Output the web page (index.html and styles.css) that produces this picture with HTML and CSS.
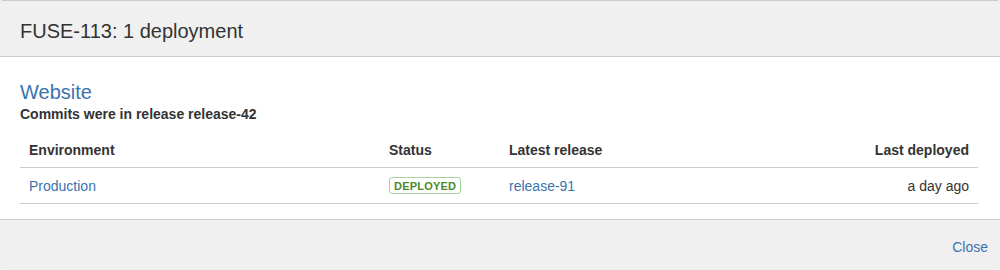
FILE: index.html
```html
<!DOCTYPE html>
<html lang="en">
<head>
  <meta charset="UTF-8">
  <title>FUSE-113: 1 deployment</title>
  <link rel="stylesheet" href="styles.css">
</head>
<body>
  <section class="dialog">
    <header class="dialog-header">
      <h1>FUSE-113: 1 deployment</h1>
    </header>
    <div class="dialog-content">
      <h2><a href="#">Website</a></h2>
      <p class="commits">Commits were in release release-42</p>
      <table class="deployments">
        <thead>
          <tr>
            <th class="col-env">Environment</th>
            <th class="col-status">Status</th>
            <th class="col-release">Latest release</th>
            <th class="col-date">Last deployed</th>
          </tr>
        </thead>
        <tbody>
          <tr>
            <td><a href="#">Production</a></td>
            <td><span class="lozenge">Deployed</span></td>
            <td><a href="#">release-91</a></td>
            <td class="col-date">a day ago</td>
          </tr>
        </tbody>
      </table>
    </div>
    <footer class="dialog-footer">
      <a href="#" class="close">Close</a>
    </footer>
  </section>
</body>
</html>
```
FILE: styles.css
```css
* {
  margin: 0;
  padding: 0;
  box-sizing: border-box;
}

body {
  font-family: "Liberation Sans", Arial, sans-serif;
  font-size: 14px;
  color: #333;
  background: #fff;
}

a {
  color: #3b73af;
  text-decoration: none;
}

.dialog {
  width: 1000px;
  height: 270px;
  display: flex;
  flex-direction: column;
  border-radius: 3px;
  overflow: hidden;
  border-top: 1px solid #ccc;
}

.dialog-header {
  height: 56px;
  background: #f0f0f0;
  border-bottom: 1px solid #ccc;
  padding: 5px 20px 0;
  display: flex;
  align-items: center;
}

.dialog-header h1 {
  font-size: 20px;
  font-weight: normal;
  line-height: 30px;
  color: #333;
}

.dialog-content {
  padding: 22px 22px 15px 20px;
  background: #fff;
}

.dialog-content h2 {
  font-size: 20px;
  font-weight: normal;
  line-height: 26px;
}

.commits {
  font-size: 14px;
  font-weight: bold;
  line-height: 18px;
}

.deployments {
  width: 100%;
  border-collapse: collapse;
  margin-top: 10px;
}

.deployments th,
.deployments td {
  text-align: left;
  padding: 7px 9px;
  line-height: 20px;
  border-bottom: 1px solid #ccc;
  vertical-align: middle;
}

.deployments th {
  font-weight: bold;
}

.deployments td {
  padding-top: 8px;
  padding-bottom: 7px;
}

.col-env { width: 360px; }
.col-status { width: 120px; }
.deployments .col-date { text-align: right; }

.lozenge {
  display: inline-block;
  font-size: 11px;
  font-weight: bold;
  line-height: 14px;
  text-transform: uppercase;
  letter-spacing: 0.2px;
  color: #4b8b2c;
  border: 1px solid #a9d2a3;
  border-radius: 3px;
  padding: 1px 4px 0;
  vertical-align: 1px;
}

.dialog-footer {
  flex: 1;
  background: #f0f0f0;
  border-top: 1px solid #ccc;
  display: flex;
  justify-content: flex-end;
  align-items: center;
  padding: 3px 12px 0 20px;
}

.close {
  font-size: 14px;
  line-height: 20px;
}
```
